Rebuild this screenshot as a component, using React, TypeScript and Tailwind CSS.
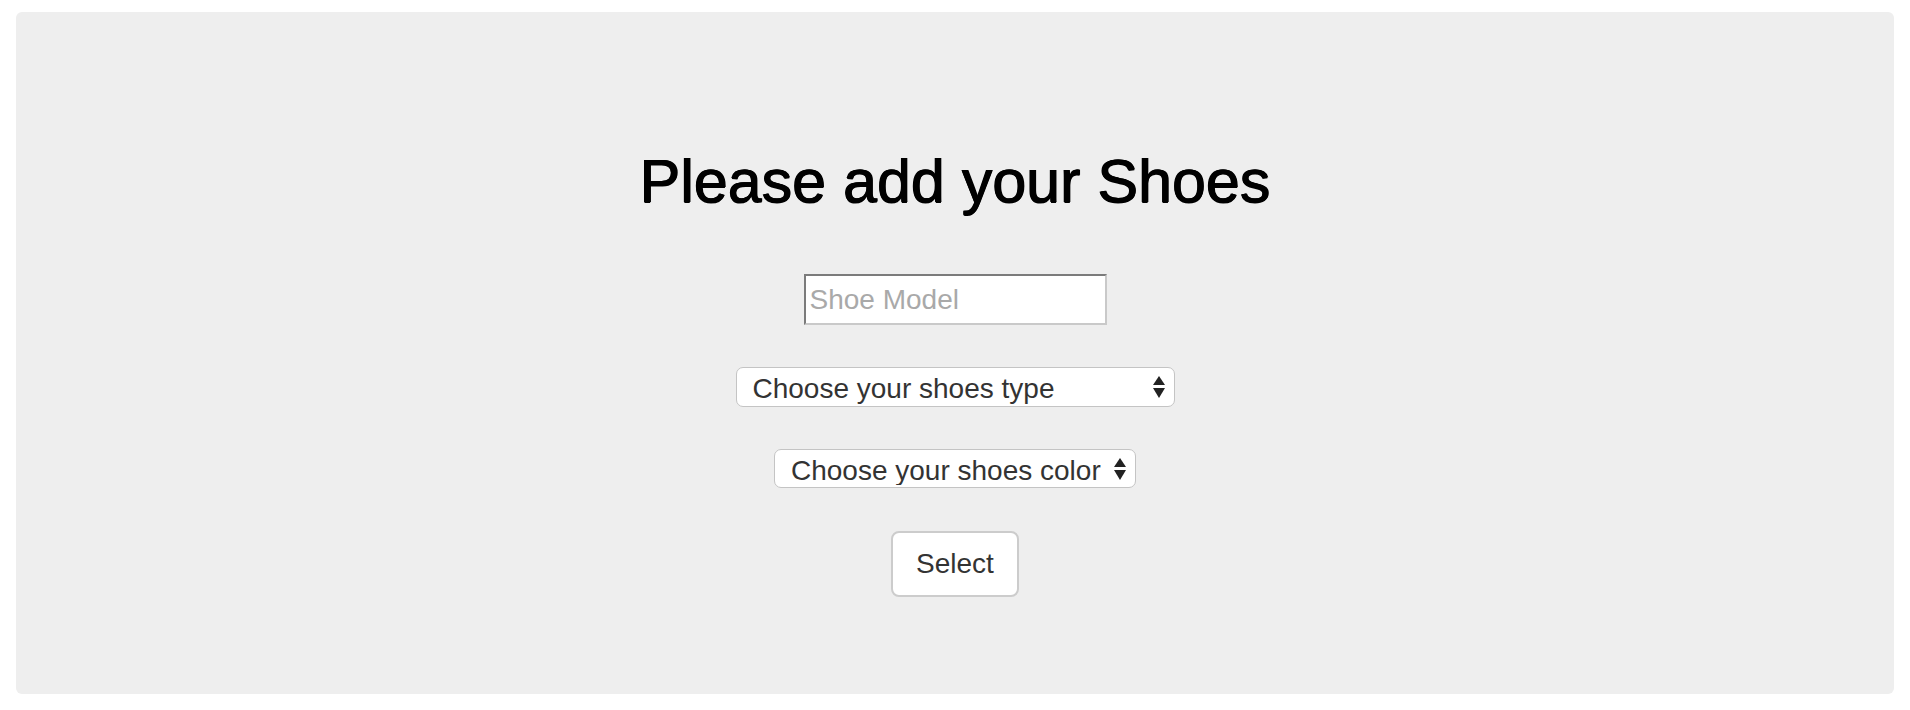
import React from 'react';

const Arrows: React.FC = () => (
  <svg width="12" height="22" viewBox="0 0 12 22" className="pointer-events-none absolute right-[10px] top-1/2 -translate-y-1/2">
    <path d="M6 0 L12 9 L0 9 Z" fill="#222" />
    <path d="M0 12 L12 12 L6 22 Z" fill="#222" />
  </svg>
);

const App: React.FC = () => {
  return (
    <div className="min-h-[710px] bg-white pt-3 px-4 font-['Liberation_Sans',Arial,sans-serif]">
      {/* panel */}
      <div className="h-[682px] rounded-md bg-[#eeeeee] flex flex-col items-center pt-[136px]">
        <h1 className="text-[61px] leading-[67px] text-black [text-shadow:0.6px_0_0_#000,-0.6px_0_0_#000,0_0.5px_0_#000]">
          Please add your Shoes
        </h1>

        <input
          type="text"
          placeholder="Shoe Model"
          className="mt-[59px] w-[303px] h-[51px] bg-white px-1 text-[28px] text-[#333] placeholder:text-[#a9a9a9] border-2 border-t-[#7b7b7b] border-l-[#7b7b7b] border-b-[#c9c9c9] border-r-[#c9c9c9] outline-none"
        />

        <div className="relative mt-[42px]">
          <select className="appearance-none w-[439px] h-[40px] rounded-[7px] border border-[#c4c4c4] bg-white pl-4 pb-[2px] text-[28px] text-[#333] outline-none">
            <option>Choose your shoes type</option>
            <option>Sneakers</option>
            <option>Boots</option>
            <option>Sandals</option>
          </select>
          <Arrows />
        </div>

        <div className="relative mt-[42px]">
          <select className="appearance-none w-[362px] h-[39px] rounded-[7px] border border-[#c4c4c4] bg-white pl-[16px] pb-[2px] text-[28px] text-[#333] outline-none">
            <option>Choose your shoes color</option>
            <option>Black</option>
            <option>White</option>
            <option>Brown</option>
          </select>
          <Arrows />
        </div>

        <button className="mt-[43px] w-[128px] h-[66px] rounded-[8px] border-2 border-[#cccccc] bg-white text-[28px] text-[#333]">
          Select
        </button>
      </div>
    </div>
  );
};

export default App;
